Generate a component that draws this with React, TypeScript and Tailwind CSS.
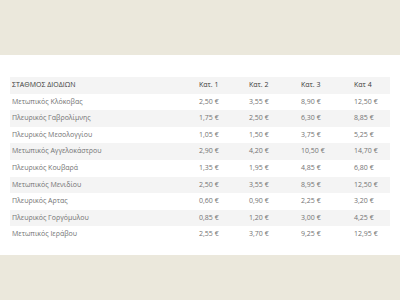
const rows: [string, string, string, string, string][] = [
  ['Μετωπικός Κλόκοβας', '2,50 €', '3,55 €', '8,90 €', '12,50 €'],
  ['Πλευρικός Γαβρολίμνης', '1,75 €', '2,50 €', '6,30 €', '8,85 €'],
  ['Πλευρικός Μεσολογγίου', '1,05 €', '1,50 €', '3,75 €', '5,25 €'],
  ['Μετωπικός Αγγελοκάστρου', '2,90 €', '4,20 €', '10,50 €', '14,70 €'],
  ['Πλευρικός Κουβαρά', '1,35 €', '1,95 €', '4,85 €', '6,80 €'],
  ['Μετωπικός Μενιδίου', '2,50 €', '3,55 €', '8,95 €', '12,50 €'],
  ['Πλευρικός Αρτας', '0,60 €', '0,90 €', '2,25 €', '3,20 €'],
  ['Πλευρικός Γοργόμυλου', '0,85 €', '1,20 €', '3,00 €', '4,25 €'],
  ['Μετωπικός Ιεράβου', '2,55 €', '3,70 €', '9,25 €', '12,95 €'],
];

const cols = 'grid grid-cols-[187px_50px_52px_53px_1fr] items-center h-[16.6px] pl-[2px]';

export default function App() {
  return (
    <div className="w-[400px] h-[300px] flex flex-col bg-white font-['Open_Sans',sans-serif] overflow-hidden">
      <div className="h-[55px] bg-[#ebe8dc]" />
      <div className="flex-1 px-[10px] pt-[22px]">
        <div className={`${cols} bg-[#f4f4f4] text-[7px] font-medium text-[#3a3a3a]`}>
          <span>ΣΤΑΘΜΟΣ ΔΙΟΔΙΩΝ</span>
          <span>Κατ. 1</span>
          <span>Κατ. 2</span>
          <span>Κατ. 3</span>
          <span>Κατ 4</span>
        </div>
        {rows.map((r, i) => (
          <div key={r[0]} className={`${cols} text-[7px] text-[#737373] ${i % 2 === 1 ? 'bg-[#f4f4f4]' : 'bg-white'}`}>
            {r.map((c, j) => (
              <span key={j}>{c}</span>
            ))}
          </div>
        ))}
      </div>
      <div className="h-[45px] bg-[#ebe8dc]" />
    </div>
  );
}
